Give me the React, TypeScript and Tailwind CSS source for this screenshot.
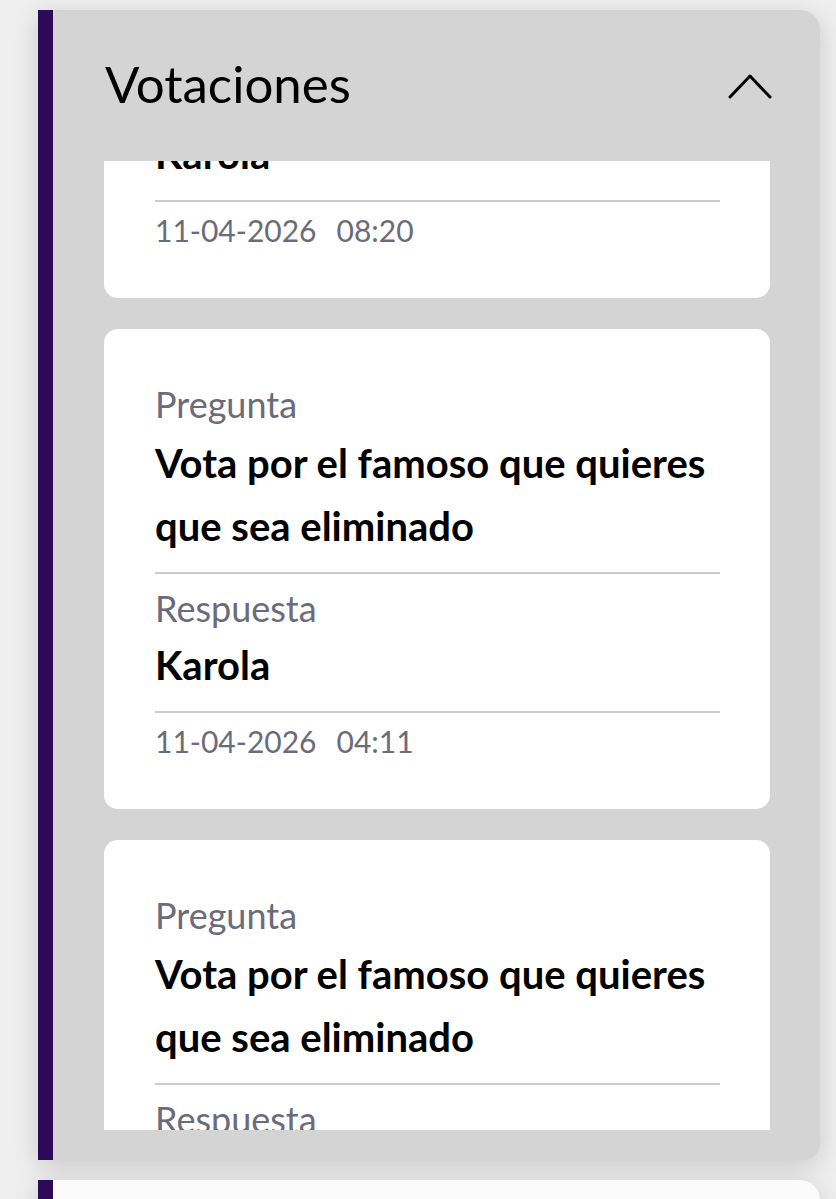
import React, { useLayoutEffect, useRef } from "react";

type Vote = {
  question: string;
  answer: string;
  date: string;
  time: string;
};

const votes: Vote[] = [
  { question: "Vota por el famoso que quieres que sea eliminado", answer: "Karola", date: "11-04-2026", time: "08:20" },
  { question: "Vota por el famoso que quieres que sea eliminado", answer: "Karola", date: "11-04-2026", time: "04:11" },
  { question: "Vota por el famoso que quieres que sea eliminado", answer: "Karola", date: "10-04-2026", time: "22:47" },
];

const VoteCard: React.FC<{ vote: Vote }> = ({ vote }) => (
  <div className="bg-white rounded-[14px] pl-[51px] pr-[50px] pt-[55px] pb-[48px] shrink-0">
    <p className="text-[36px] leading-[40px] text-[#6b6b7a]">Pregunta</p>
    <p className="mt-2 text-[40px] leading-[63px] font-bold text-black">{vote.question}</p>
    <div className="mt-[14px] h-[2px] bg-[#cbcbcb]" />
    <p className="mt-[14px] text-[36px] leading-[40px] text-[#6b6b7a]">Respuesta</p>
    <p className="mt-[6px] text-[40px] leading-[63px] font-bold text-black">{vote.answer}</p>
    <div className="mt-[14px] h-[2px] bg-[#cbcbcb]" />
    <p className="mt-2 text-[30px] leading-[40px] text-[#6b6b7a]">
      <span>{vote.date}</span>
      <span className="ml-[20px]">{vote.time}</span>
    </p>
  </div>
);

const ChevronUp = () => (
  <svg width="44" height="25" viewBox="0 0 44 25" fill="none" className="mt-[4px]">
    <polyline points="2,23 22,2 42,23" stroke="#000" strokeWidth="3" strokeLinecap="round" strokeLinejoin="round" />
  </svg>
);

export default function App() {
  const listRef = useRef<HTMLDivElement>(null);

  // list is scrolled partway down, the first card peeks in at the top
  useLayoutEffect(() => {
    if (listRef.current) listRef.current.scrollTop = 343;
  }, []);

  return (
    <div className="h-screen bg-[#efefef] pt-[10px] pl-[38px] pr-[16px] font-['Lato',sans-serif] overflow-hidden">
      <section className="flex flex-col h-[1150px] bg-[#d4d4d4] border-l-[15px] border-[#2c0a58] rounded-tr-[20px] rounded-br-[16px] shadow-[0_6px_26px_rgba(0,0,0,0.16)]">
        <header className="flex items-start justify-between h-[151px] shrink-0 pt-[44px] pl-[52px] pr-[48px]">
          <h2 className="text-[51px] leading-[60px] text-black font-normal">Votaciones</h2>
          <div className="h-[60px] flex items-center">
            <ChevronUp />
          </div>
        </header>
        <div ref={listRef} className="h-[969px] shrink-0 overflow-hidden ml-[51px] mr-[50px] flex flex-col gap-[31px]">
          {votes.map((v, i) => (
            <VoteCard key={i} vote={v} />
          ))}
        </div>
      </section>
      <section className="mt-[20px] h-[80px] bg-[#fbfbfb] border-l-[15px] border-[#2c0a58] rounded-tr-[20px] shadow-[0_6px_26px_rgba(0,0,0,0.16)]" />
    </div>
  );
}
